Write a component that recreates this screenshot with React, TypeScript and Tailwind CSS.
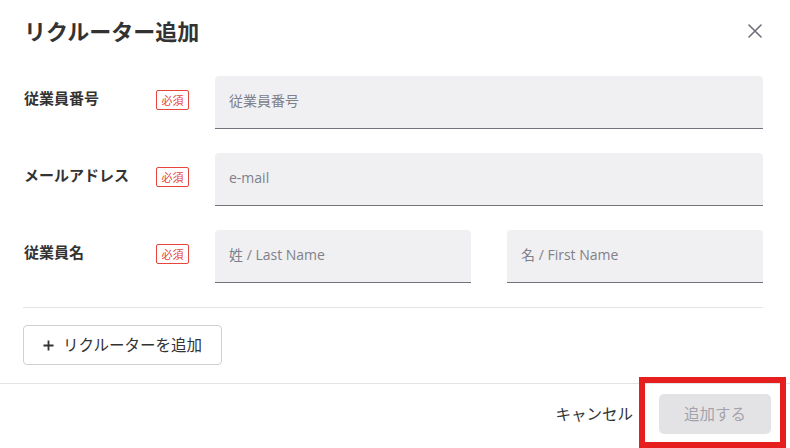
import React from "react";

const font = { fontFamily: '"Noto Sans CJK JP", "Noto Sans", sans-serif' };
const latinFont = { fontFamily: '"Open Sans", "Noto Sans CJK JP", sans-serif' };

function Badge() {
  return (
    <span className="mt-[2px] inline-flex h-[20px] w-[33px] shrink-0 items-center justify-center rounded-[2px] border border-[#e5453b] text-[11px] leading-none text-[#e5453b]">
      必須
    </span>
  );
}

function Field({ placeholder }: { placeholder: string }) {
  return (
    <div
      className="flex h-[53px] flex-1 items-center rounded-t-[4px] border-b border-[#72727c] bg-[#f0f0f2] px-[14px] pb-[3px] text-[14px] text-[#80808a]"
      style={latinFont}
    >
      {placeholder}
    </div>
  );
}

function Row({ label, children }: { label: string; children: React.ReactNode }) {
  return (
    <div className="flex items-start">
      <div className="flex w-[191px] shrink-0 items-start pt-[12px]">
        <span className="w-[132px] text-[15px] font-bold leading-[20px] text-[#333]">{label}</span>
        <Badge />
      </div>
      <div className="flex flex-1 gap-[36px]">{children}</div>
    </div>
  );
}

export default function App() {
  return (
    <div className="relative h-[448px] w-[790px] overflow-hidden bg-white" style={font}>
      <div className="flex items-center justify-between pl-6 pr-[28px] pt-[14px]">
        <h1 className="text-[22px] font-bold leading-[32px] text-[#333]">リクルーター追加</h1>
        <svg width="14" height="14" viewBox="0 0 14 14" className="mt-[1px]">
          <path d="M1 1L13 13M13 1L1 13" stroke="#6e6e7a" strokeWidth="1.6" strokeLinecap="round" />
        </svg>
      </div>

      <div className="mt-[30px] flex flex-col gap-[24px] pl-6 pr-[27px]">
        <Row label="従業員番号">
          <Field placeholder="従業員番号" />
        </Row>
        <Row label="メールアドレス">
          <Field placeholder="e-mail" />
        </Row>
        <Row label="従業員名">
          <Field placeholder="姓 / Last Name" />
          <Field placeholder="名 / First Name" />
        </Row>
      </div>

      <div className="ml-[23px] mr-[27px] mt-[24px] border-t border-[#e3e3e6]" />

      <div className="ml-[23px] mt-[17px]">
        <button className="flex h-[40px] w-[199px] items-center justify-center gap-[9px] rounded-[4px] border border-[#cfcfd5] bg-white text-[15.5px] text-[#333]">
          <svg width="11" height="11" viewBox="0 0 11 11">
            <path d="M5.5 0.5V10.5M0.5 5.5H10.5" stroke="#333" strokeWidth="1.8" />
          </svg>
          <span>リクルーターを追加</span>
        </button>
      </div>

      <div className="mt-[18px] border-t border-[#e3e3e6]" />

      <div className="flex items-center justify-end gap-[26px] pr-[19px] pt-[10px]">
        <span className="text-[15.5px] text-[#333]">キャンセル</span>
        <div className="flex h-[40px] w-[112px] items-center justify-center rounded-[5px] bg-[#e3e3e6] text-[15.5px] text-[#a3a3ab]">
          追加する
        </div>
      </div>

      <div className="pointer-events-none absolute left-[639px] top-[377px] h-[71px] w-[147px] border-[6px] border-[#e61e1e]" />
    </div>
  );
}
